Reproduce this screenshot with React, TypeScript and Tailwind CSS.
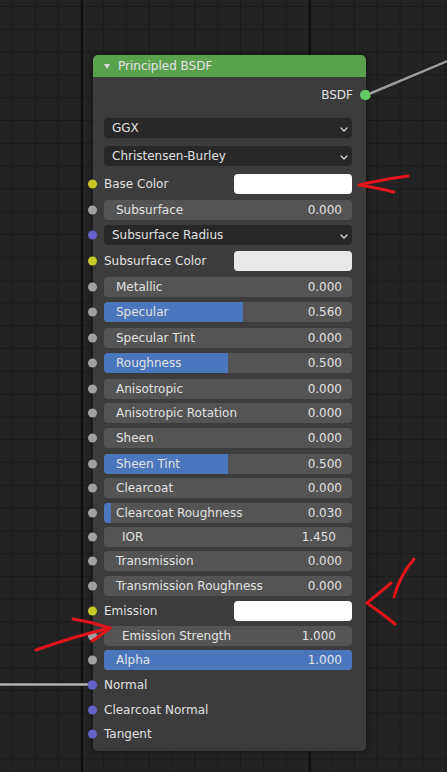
import React from "react";

type Base = { label: string; socket?: string; mt: string };
type Row =
  | (Base & { kind: "color"; swatch: string })
  | (Base & { kind: "slider"; value: string; fill: number })
  | (Base & { kind: "number"; value: string })
  | (Base & { kind: "dropdown" })
  | (Base & { kind: "input" });

const Y = "#c7c729";
const G = "#a1a1a1";
const P = "#6363c7";

const rows: Row[] = [
  { kind: "color", label: "Base Color", socket: Y, swatch: "#ffffff", mt: "mt-0" },
  { kind: "slider", label: "Subsurface", socket: G, value: "0.000", fill: 0, mt: "mt-[6px]" },
  { kind: "dropdown", label: "Subsurface Radius", socket: P, mt: "mt-[5px]" },
  { kind: "color", label: "Subsurface Color", socket: Y, swatch: "#e9e9e9", mt: "mt-[6px]" },
  { kind: "slider", label: "Metallic", socket: G, value: "0.000", fill: 0, mt: "mt-[6px]" },
  { kind: "slider", label: "Specular", socket: G, value: "0.560", fill: 0.56, mt: "mt-[5px]" },
  { kind: "slider", label: "Specular Tint", socket: G, value: "0.000", fill: 0, mt: "mt-[6px]" },
  { kind: "slider", label: "Roughness", socket: G, value: "0.500", fill: 0.5, mt: "mt-[5px]" },
  { kind: "slider", label: "Anisotropic", socket: G, value: "0.000", fill: 0, mt: "mt-[5.5px]" },
  { kind: "slider", label: "Anisotropic Rotation", socket: G, value: "0.000", fill: 0, mt: "mt-[4.5px]" },
  { kind: "slider", label: "Sheen", socket: G, value: "0.000", fill: 0, mt: "mt-[5px]" },
  { kind: "slider", label: "Sheen Tint", socket: G, value: "0.500", fill: 0.5, mt: "mt-[5.5px]" },
  { kind: "slider", label: "Clearcoat", socket: G, value: "0.000", fill: 0, mt: "mt-[4.5px]" },
  { kind: "slider", label: "Clearcoat Roughness", socket: G, value: "0.030", fill: 0.03, mt: "mt-[4.5px]" },
  { kind: "number", label: "IOR", socket: G, value: "1.450", mt: "mt-[4.5px]" },
  { kind: "slider", label: "Transmission", socket: G, value: "0.000", fill: 0, mt: "mt-[4px]" },
  { kind: "slider", label: "Transmission Roughness", socket: G, value: "0.000", fill: 0, mt: "mt-[5px]" },
  { kind: "color", label: "Emission", socket: Y, swatch: "#ffffff", mt: "mt-[5px]" },
  { kind: "number", label: "Emission Strength", socket: G, value: "1.000", mt: "mt-[4.5px]" },
  { kind: "slider", label: "Alpha", socket: G, value: "1.000", fill: 1, mt: "mt-[4.5px]" },
  { kind: "input", label: "Normal", socket: P, mt: "mt-[5px]" },
  { kind: "input", label: "Clearcoat Normal", socket: P, mt: "mt-[4.5px]" },
  { kind: "input", label: "Tangent", socket: P, mt: "mt-[4.5px]" },
];

function Socket({ color }: { color: string }) {
  return (
    <span
      className="absolute left-[-5.5px] top-1/2 -translate-y-1/2 w-[9px] h-[9px] rounded-full"
      style={{ backgroundColor: color }}
    />
  );
}

function Chevron() {
  return (
    <svg width="8" height="5" viewBox="0 0 8 5" className="mt-[2px]">
      <polyline points="1,1 4,4 7,1" fill="none" stroke="#d8d8d8" strokeWidth="1.3" strokeLinecap="round" strokeLinejoin="round" />
    </svg>
  );
}

function Dropdown({ label }: { label: string }) {
  return (
    <div className="h-[20px] rounded-[4px] bg-[#282828] flex items-center justify-between pl-[8px] pr-[4px] text-[#e0e0e0]">
      <span>{label}</span>
      <Chevron />
    </div>
  );
}

function RowView({ r }: { r: Row }) {
  return (
    <div className={`relative h-[20px] pl-[11px] pr-[14px] leading-[20px] ${r.mt}`}>
      {r.socket && <Socket color={r.socket} />}
      {r.kind === "color" && (
        <div className="flex items-center justify-between h-[20px]">
          <span className="text-[#e0e0e0]">{r.label}</span>
          <span className="w-[118px] h-[20px] rounded-[4px]" style={{ backgroundColor: r.swatch }} />
        </div>
      )}
      {r.kind === "slider" && (
        <div className="relative h-[20px] rounded-[4px] bg-[#545454] overflow-hidden">
          <div className="absolute left-0 top-0 bottom-0 bg-[#4a76bd]" style={{ width: `${r.fill * 100}%` }} />
          <div className="relative flex justify-between pl-[12px] pr-[10px] text-[#e2e2e2]">
            <span>{r.label}</span>
            <span>{r.value}</span>
          </div>
        </div>
      )}
      {r.kind === "number" && (
        <div className="h-[20px] rounded-[4px] bg-[#545454] flex justify-between pl-[18px] pr-[16px] text-[#e2e2e2]">
          <span>{r.label}</span>
          <span>{r.value}</span>
        </div>
      )}
      {r.kind === "dropdown" && <Dropdown label={r.label} />}
      {r.kind === "input" && <span className="text-[#e0e0e0]">{r.label}</span>}
    </div>
  );
}

export default function App() {
  return (
    <div
      className="relative w-[447px] h-[772px] overflow-hidden bg-[#232323] font-['DejaVu_Sans',Verdana,sans-serif] text-[12px] bg-[image:linear-gradient(to_right,#0f0f0f_2px,transparent_2px),linear-gradient(to_right,#1a1a1a_1px,transparent_1px),linear-gradient(to_bottom,#1a1a1a_1px,transparent_1px)] bg-[size:228px_100%,22.8px_22.8px,22.8px_22.8px] bg-[position:81px_0,12px_6px,12px_6px] pt-[55px] pl-[93px]"
    >
      <div className="w-[273px] rounded-[5px] bg-[#3c3c3c] shadow-[0_0_6px_rgba(0,0,0,0.55)]">
        <div className="h-[22px] rounded-t-[5px] bg-[#5aa14e] flex items-center pl-[11px] text-[#e4e4e4]">
          <svg width="6" height="5" viewBox="0 0 6 5" className="mr-[8px] mt-[1px]">
            <polygon points="0,0 6,0 3,5" fill="#dcdcdc" />
          </svg>
          <span>Principled BSDF</span>
        </div>
        <div className="pt-[8px] pb-[7px]">
          <div className="relative h-[20px] leading-[20px] flex justify-end pr-[13px] text-[#e0e0e0]">
            <span>BSDF</span>
            <span className="absolute right-[-5px] top-1/2 -translate-y-1/2 w-[10px] h-[10px] rounded-full bg-[#63c763]" />
          </div>
          <div className="mt-[13px] pl-[11px] pr-[14px] leading-[20px]">
            <Dropdown label="GGX" />
          </div>
          <div className="mt-[8px] pl-[11px] pr-[14px] leading-[20px]">
            <Dropdown label="Christensen-Burley" />
          </div>
          <div className="mt-[8px] flex flex-col">
            {rows.map((r) => (
              <RowView key={r.label} r={r} />
            ))}
          </div>
        </div>
      </div>

      <svg className="absolute inset-0 pointer-events-none" width="447" height="772" viewBox="0 0 447 772">
        <line x1="369" y1="94" x2="450" y2="60" stroke="#1e1e1e" strokeWidth="4.5" />
        <line x1="369" y1="94" x2="450" y2="60" stroke="#9d9d9d" strokeWidth="2.5" />
        <line x1="-2" y1="684.5" x2="88" y2="684.5" stroke="#1e1e1e" strokeWidth="4.5" />
        <line x1="-2" y1="684.5" x2="88" y2="684.5" stroke="#b4b4b4" strokeWidth="2.5" />
        <circle cx="365" cy="95" r="5" fill="#63c763" />
        <circle cx="92" cy="685" r="4.5" fill={P} />
        <g fill="none" stroke="#e3141c" strokeWidth="3" strokeLinecap="round" strokeLinejoin="round">
          <path d="M408 176 Q385 179 359 185 Q378 188 394 192" />
          <path d="M414 559 Q400 575 394 597" />
          <path d="M391 583 Q378 594 367 603 Q382 613 395 624" />
          <path d="M36 650 Q72 637 110 628" />
          <path d="M73 619 Q92 622 110 628 Q100 636 92 641" />
        </g>
      </svg>
    </div>
  );
}
